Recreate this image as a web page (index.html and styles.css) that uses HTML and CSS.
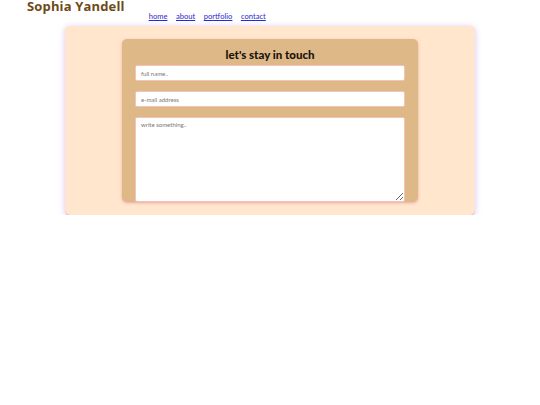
FILE: index.html
```html
<!DOCTYPE html>
<html>
<head>
<meta charset="utf-8">
<link rel="stylesheet" href="styles.css">
</head>
<body>
<header class="top">
  <h1 class="name">Sophia Yandell</h1>
  <nav class="nav">
    <a href="#">home</a>
    <a href="#">about</a>
    <a href="#">portfolio</a>
    <a href="#">contact</a>
  </nav>
</header>
<main class="outer">
  <section class="inner">
    <h2 class="title">let's stay in touch</h2>
    <input class="field" type="text" placeholder="full name..">
    <input class="field" type="text" placeholder="e-mail address">
    <textarea class="field area" placeholder="write something.."></textarea>
  </section>
</main>
</body>
</html>
```
FILE: styles.css
```css
html, body { margin: 0; padding: 0; background: #fff; }
body { font-family: "Open Sans", "DejaVu Sans", sans-serif; }
.top {
  display: flex;
  align-items: flex-start;
  height: 26px;
}
.name {
  margin: 0 0 0 27px;
  font-size: 13px;
  line-height: 12px;
  font-weight: 700;
  color: #6e4a16;
  letter-spacing: 0.15px;
}
.nav {
  display: flex;
  gap: 8.5px;
  margin: 11px 0 0 24px;
  font-family: "Lato", sans-serif;
  font-size: 7.6px;
  line-height: 10px;
}
.nav a { color: #2a2ad0; text-decoration: underline; }
.outer {
  width: 410px;
  margin: 0 auto;
  box-sizing: border-box;
  padding: 13px 0;
  background: #ffe6cc;
  border-radius: 5px;
  box-shadow: 0 1px 0 #f0b4cf, 0 1px 6px rgba(190, 150, 255, 0.6);
}
.inner {
  width: 296px;
  margin: 0 auto;
  box-sizing: border-box;
  padding: 9px 13px 0;
  background: #deb887;
  border-radius: 5px;
  display: flex;
  flex-direction: column;
  box-shadow: 0 1px 3px rgba(230, 140, 150, 0.7);
}
.title {
  margin: 0 0 3px;
  text-align: center;
  font-family: "Lato", sans-serif;
  font-size: 11.5px;
  line-height: 14px;
  font-weight: 900;
  color: #1a140c;
}
.field {
  display: block;
  box-sizing: border-box;
  width: 100%;
  height: 16px;
  margin: 0 0 10px;
  padding: 0 5px;
  border: 1px solid #f2c3b6;
  border-radius: 2px;
  background: #fff;
  font-family: "Lato", sans-serif;
  font-size: 6px;
  outline: none;
}
.field::placeholder { color: #777; }
.area {
  height: 85px;
  margin: 0;
  padding: 3px 5px;
  resize: vertical;
}
```
